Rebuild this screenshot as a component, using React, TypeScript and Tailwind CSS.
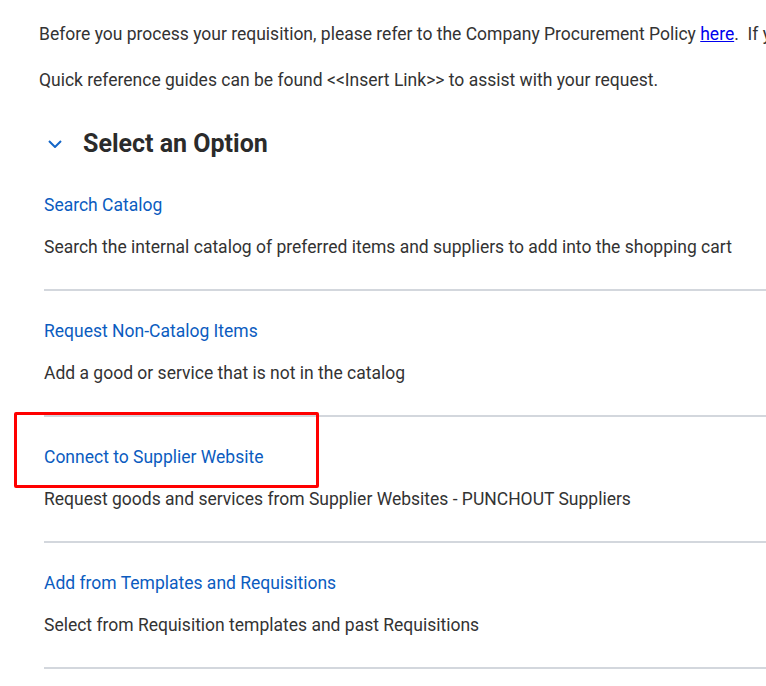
const options = [
  {
    title: 'Search Catalog',
    description:
      'Search the internal catalog of preferred items and suppliers to add into the shopping cart',
  },
  {
    title: 'Request Non-Catalog Items',
    description: 'Add a good or service that is not in the catalog',
  },
  {
    title: 'Connect to Supplier Website',
    description: 'Request goods and services from Supplier Websites - PUNCHOUT Suppliers',
    highlighted: true,
  },
  {
    title: 'Add from Templates and Requisitions',
    description: 'Select from Requisition templates and past Requisitions',
  },
];

export default function App() {
  return (
    <div className="min-h-screen w-[766px] overflow-hidden bg-white pl-[39px] pt-[22px] font-['Roboto',sans-serif] text-[17.5px] text-[#333333]">
      {/* Intro text */}
      <p className="whitespace-nowrap leading-6">
        Before you process your requisition, please refer to the Company Procurement Policy{' '}
        <a href="#" className="text-[#0000ee] underline">
          here
        </a>
        .&nbsp; If you
      </p>
      <p className="mt-[22px] leading-6">
        Quick reference guides can be found &lt;&lt;Insert Link&gt;&gt; to assist with your request.
      </p>

      {/* Section heading */}
      <div className="mt-[36px] flex items-center">
        <svg width="14" height="8" viewBox="0 0 14 8" className="ml-[9px] mr-[21px]">
          <path d="M1 1l6 6 6-6" fill="none" stroke="#1466c8" strokeWidth="2" />
        </svg>
        <h2 className="text-[25px] font-bold leading-8 text-[#2b2b2b]">Select an Option</h2>
      </div>

      {/* Options */}
      <div className="ml-[5px] mt-[5px]">
        {options.map((opt) => (
          <div key={opt.title} className="relative border-b-2 border-[#d3d7dd] pb-[29px] pt-[27px]">
            {opt.highlighted && (
              <div className="pointer-events-none absolute left-[-30px] top-[-5px] h-[76px] w-[305px] rounded-[2px] border-[3px] border-[#ff0000]" />
            )}
            <a href="#" className="block leading-[26px] text-[#0b5cbf]">
              {opt.title}
            </a>
            <p className="mt-[16px] leading-[26px]">{opt.description}</p>
          </div>
        ))}
      </div>
    </div>
  );
}
